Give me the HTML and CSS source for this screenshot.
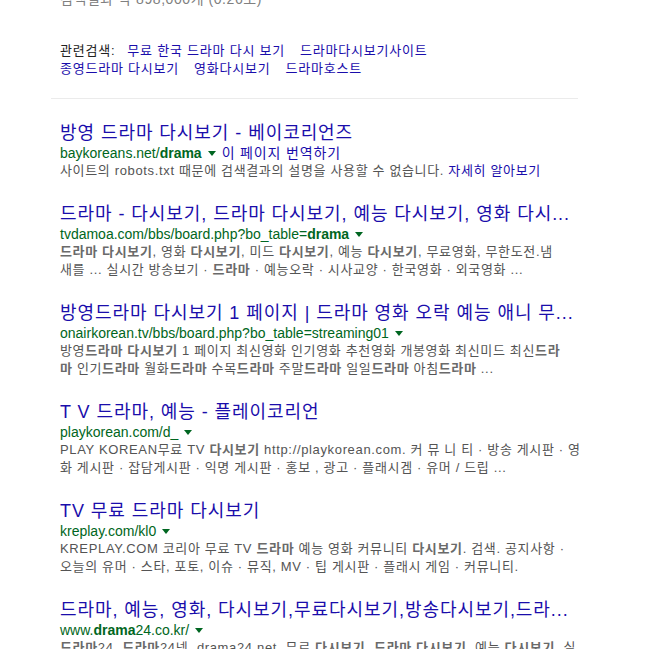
FILE: index.html
```html
<!DOCTYPE html>
<html lang="ko">
<head>
<meta charset="utf-8">
<link rel="stylesheet" href="styles.css">
</head>
<body>
<div class="page">
  <div class="stats">검색결과 약 898,000개 (0.26초)</div>
  <div class="related">
    <div class="rel-line"><span class="rel-label">관련검색:</span><a class="rel-link">무료 한국 드라마 다시 보기</a><a class="rel-link">드라마다시보기사이트</a></div>
    <div class="rel-line"><a class="rel-link first">종영드라마 다시보기</a><a class="rel-link">영화다시보기</a><a class="rel-link">드라마호스트</a></div>
  </div>
  <div class="divider"></div>
  <div class="results">
    <div class="result">
      <div class="title">방영 드라마 다시보기 - 베이코리언즈</div>
      <div class="url">baykoreans.net/<b>drama</b><span class="caret"></span><a class="translate">이 페이지 번역하기</a></div>
      <div class="snippet"><div class="line">사이트의 robots.txt 때문에 검색결과의 설명을 사용할 수 없습니다. <a class="more">자세히 알아보기</a></div></div>
    </div>
    <div class="result">
      <div class="title">드라마 - 다시보기, 드라마 다시보기, 예능 다시보기, 영화 다시...</div>
      <div class="url">tvdamoa.com/bbs/board.php?bo_table=<b>drama</b><span class="caret"></span></div>
      <div class="snippet">
        <div class="line"><b>드라마 다시보기</b>, 영화 <b>다시보기</b>, 미드 <b>다시보기</b>, 예능 <b>다시보기</b>, 무료영화, 무한도전.냄</div>
        <div class="line">새를 ... 실시간 방송보기 · <b>드라마</b> · 예능오락 · 시사교양 · 한국영화 · 외국영화 ...</div>
      </div>
    </div>
    <div class="result">
      <div class="title">방영드라마 다시보기 1 페이지 | 드라마 영화 오락 예능 애니 무...</div>
      <div class="url">onairkorean.tv/bbs/board.php?bo_table=streaming01<span class="caret"></span></div>
      <div class="snippet">
        <div class="line">방영<b>드라마 다시보기</b> 1 페이지 최신영화 인기영화 추천영화 개봉영화 최신미드 최신<b>드라</b></div>
        <div class="line"><b>마</b> 인기<b>드라마</b> 월화<b>드라마</b> 수목<b>드라마</b> 주말<b>드라마</b> 일일<b>드라마</b> 아침<b>드라마</b> ...</div>
      </div>
    </div>
    <div class="result">
      <div class="title">T V 드라마, 예능 - 플레이코리언</div>
      <div class="url">playkorean.com/d_<span class="caret"></span></div>
      <div class="snippet">
        <div class="line">PLAY KOREAN무료 TV <b>다시보기</b> http://playkorean.com. 커 뮤 니 티 · 방송 게시판 · 영</div>
        <div class="line">화 게시판 · 잡담게시판 · 익명 게시판 · 홍보 , 광고 · 플래시겜 · 유머 / 드립 ...</div>
      </div>
    </div>
    <div class="result">
      <div class="title">TV 무료 드라마 다시보기</div>
      <div class="url">kreplay.com/kl0<span class="caret"></span></div>
      <div class="snippet">
        <div class="line">KREPLAY.COM 코리아 무료 TV <b>드라마</b> 예능 영화 커뮤니티 <b>다시보기</b>. 검색. 공지사항 ·</div>
        <div class="line">오늘의 유머 · 스타, 포토, 이슈 · 뮤직, MV · 팁 게시판 · 플래시 게임 · 커뮤니티.</div>
      </div>
    </div>
    <div class="result">
      <div class="title">드라마, 예능, 영화, 다시보기,무료다시보기,방송다시보기,드라...</div>
      <div class="url">www.<b>drama</b>24.co.kr/<span class="caret"></span></div>
      <div class="snippet">
        <div class="line"><b>드라마</b>24, <b>드라마</b>24넷, drama24.net, 무료 <b>다시보기</b>, <b>드라마 다시보기</b>, 예능 <b>다시보기</b>, 실</div>
        <div class="line">시간 방송 보기</div>
      </div>
    </div>
  </div>
</div>
</body>
</html>
```

FILE: styles.css
```css
html, body {
  margin: 0;
  padding: 0;
  background: #fff;
}
body {
  font-family: "Liberation Sans", Arial, "Noto Sans CJK KR", sans-serif;
  color: #222;
  overflow: hidden;
  height: 649px;
}
.page {
  padding-left: 60px;
  width: 512px;
}
.stats {
  font-size: 14px;
  line-height: 18px;
  height: 18px;
  color: #808080;
  margin-top: -10px;
  letter-spacing: 0.04em;
  white-space: nowrap;
}
.related {
  margin-top: 34px;
  font-size: 13px;
  line-height: 18px;
  letter-spacing: 0.06em;
}
.rel-line {
  white-space: nowrap;
  height: 18px;
}
.rel-label {
  color: #222;
  margin-right: 12px;
}
.rel-link {
  color: #1a0dab;
  margin-right: 15px;
}
.divider {
  margin-top: 20px;
  margin-left: -9px;
  width: 527px;
  height: 1px;
  background: #ebebeb;
}
.results {
  margin-top: 23px;
}
.result {
  margin-bottom: 23px;
}
.title {
  font-size: 18px;
  line-height: 22px;
  height: 22px;
  color: #1a0dab;
  white-space: nowrap;
  letter-spacing: 0.052em;
}
.url {
  font-size: 14px;
  line-height: 18px;
  height: 18px;
  color: #006621;
  white-space: nowrap;
}
.url b {
  font-weight: bold;
}
.caret {
  display: inline-block;
  width: 0;
  height: 0;
  border-left: 4px solid transparent;
  border-right: 4px solid transparent;
  border-top: 5px solid #006621;
  margin-left: 6px;
  vertical-align: 2px;
}
.translate {
  color: #1a0dab;
  margin-left: 6px;
  letter-spacing: 0.06em;
}
.snippet {
  font-size: 13px;
  line-height: 18px;
  color: #545454;
  white-space: nowrap;
  letter-spacing: 0.05em;
}
.line {
  height: 18px;
}
.snippet b {
  color: #6a6a6a;
  font-weight: bold;
}
.more {
  color: #1a0dab;
}
```
